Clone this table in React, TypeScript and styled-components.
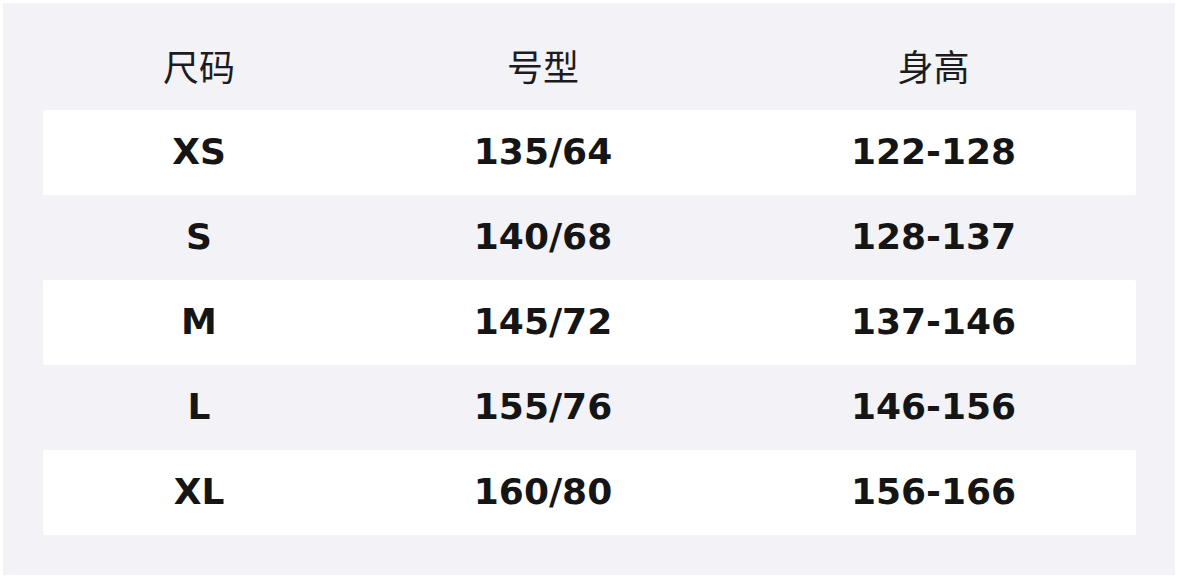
import React from 'react'
import styled, { createGlobalStyle } from 'styled-components'

type SizeRow = {
  size: string
  model: string
  height: string
}

const PANEL_BG = '#f2f2f7'
const ROW_BG = '#ffffff'
const TEXT = '#151515'

const ROWS: SizeRow[] = [
  { size: 'XS', model: '135/64', height: '122-128' },
  { size: 'S', model: '140/68', height: '128-137' },
  { size: 'M', model: '145/72', height: '137-146' },
  { size: 'L', model: '155/76', height: '146-156' },
  { size: 'XL', model: '160/80', height: '156-166' },
]

const GlobalStyle = createGlobalStyle`
  html, body {
    margin: 0;
    padding: 0;
    background: #ffffff;
  }
  * {
    box-sizing: border-box;
  }
`

const Panel = styled.div`
  margin: 3px;
  width: 1172px;
  height: 572px;
  background: ${PANEL_BG};
  padding: 40px 39px 39px 40px;
  display: flex;
  flex-direction: column;
`

const Row = styled.div<{ striped?: boolean }>`
  display: grid;
  grid-template-columns: 312px 376px 1fr;
  height: 85px;
  align-items: center;
  background: ${({ striped }) => (striped ? ROW_BG : 'transparent')};
  border-radius: 2px;
`

const HeaderRow = styled.div`
  display: grid;
  grid-template-columns: 312px 376px 1fr;
  height: 67px;
  align-items: start;
`

const HeaderCell = styled.div`
  text-align: center;
  font-family: 'Noto Sans CJK SC', 'Noto Sans', sans-serif;
  font-size: 36px;
  font-weight: 400;
  line-height: 44px;
  color: #1c1c1e;
`

const Cell = styled.div`
  text-align: center;
  font-family: 'DejaVu Sans', 'Noto Sans', sans-serif;
  font-size: 36px;
  font-weight: 700;
  color: ${TEXT};
  line-height: 40px;
  margin-top: -2px;
`

export default function App() {
  return (
    <>
      <GlobalStyle />
      <Panel>
        <HeaderRow>
          <HeaderCell>尺码</HeaderCell>
          <HeaderCell>号型</HeaderCell>
          <HeaderCell>身高</HeaderCell>
        </HeaderRow>
        {ROWS.map((row, idx) => (
          <Row key={row.size} striped={idx % 2 === 0}>
            <Cell>{row.size}</Cell>
            <Cell>{row.model}</Cell>
            <Cell>{row.height}</Cell>
          </Row>
        ))}
      </Panel>
    </>
  )
}
